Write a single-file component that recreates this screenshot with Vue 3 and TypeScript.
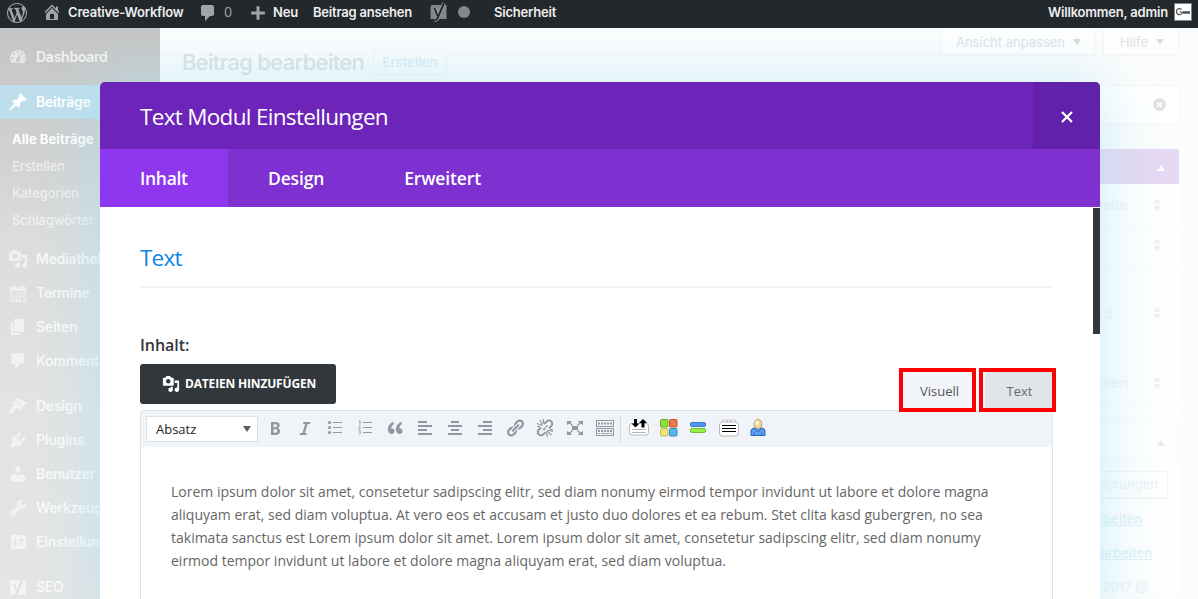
<script setup lang="ts">
interface MenuItem {
  label: string
  icon: string
  gap?: boolean
  active?: boolean
  sub?: string[]
}

const icons: Record<string, string> = {
  wordpress:
    'M20 10c0-5.51-4.49-10-10-10C4.48 0 0 4.49 0 10c0 5.52 4.48 10 10 10 5.51 0 10-4.48 10-10zM7.78 15.37L4.37 6.22c.55-.02 1.17-.08 1.17-.08.5-.06.44-1.13-.06-1.11 0 0-1.45.11-2.37.11-.18 0-.37 0-.58-.01C4.12 2.69 6.87 1.11 10 1.11c2.33 0 4.45.87 6.05 2.34-.68-.11-1.65.39-1.65 1.58 0 .74.45 1.36.9 2.1.35.61.55 1.36.55 2.46 0 1.49-1.4 5-1.4 5l-3.03-8.37c.54-.02.82-.17.82-.17.5-.05.44-1.25-.06-1.22 0 0-1.44.12-2.38.12-.87 0-2.33-.12-2.33-.12-.5-.03-.56 1.2-.06 1.22l.92.08 1.26 3.41zM17.41 10c.24-.64.74-1.87.43-4.25.7 1.29 1.05 2.71 1.05 4.25 0 3.29-1.73 6.24-4.4 7.78.97-2.59 1.94-5.2 2.92-7.78zM6.1 18.09C3.12 16.65 1.11 13.53 1.11 10c0-1.3.23-2.48.72-3.59C3.25 10.3 4.67 14.2 6.1 18.09zm4.03-6.63l2.58 6.98c-.86.29-1.76.45-2.71.45-.79 0-1.57-.11-2.29-.33.81-2.38 1.62-4.74 2.42-7.1z',
  home: 'M16 8.5l1.53 1.53-1.06 1.06L10 4.6l-6.47 6.49-1.06-1.06L10 2.5l4 4v-2h2v4zm-6-2.46l6 5.99V18H4v-5.97zM12 17v-5H8v5h4z',
  comment: 'M5 2h9c1.1 0 2 .9 2 2v7c0 1.1-.9 2-2 2h-2l-5 5v-5H5c-1.1 0-2-.9-2-2V4c0-1.1.9-2 2-2z',
  dashboard:
    'M3.76 16h12.48c1.1-1.37 1.76-3.11 1.76-5 0-4.42-3.58-8-8-8s-8 3.58-8 8c0 1.89.66 3.63 1.76 5zM10 4c.55 0 1 .45 1 1s-.45 1-1 1-1-.45-1-1 .45-1 1-1zM6 6c.55 0 1 .45 1 1s-.45 1-1 1-1-.45-1-1 .45-1 1-1zm8 0c.55 0 1 .45 1 1s-.45 1-1 1-1-.45-1-1 .45-1 1-1zm-5.37 5.55L12 7v6c0 1.1-.9 2-2 2s-2-.9-2-2c0-.57.24-1.08.63-1.45zM4 10c.55 0 1 .45 1 1s-.45 1-1 1-1-.45-1-1 .45-1 1-1zm12 0c.55 0 1 .45 1 1s-.45 1-1 1-1-.45-1-1 .45-1 1-1z',
  post: 'M10.44 3.02l1.82-1.82 6.36 6.35-1.83 1.82c-1.05-.68-2.48-.57-3.41.36l-.75.75c-.92.93-1.04 2.35-.35 3.41l-1.83 1.82-2.41-2.41-2.8 2.79c-.42.42-3.38 2.71-3.8 2.29s1.86-3.39 2.28-3.81l2.79-2.79L4.1 9.36l1.83-1.82c1.05.69 2.48.57 3.4-.36l.75-.75c.93-.92 1.05-2.35.36-3.41z',
  media:
    'M13 11V4c0-.55-.45-1-1-1h-1.67L9 1H5L3.67 3H2c-.55 0-1 .45-1 1v7c0 .55.45 1 1 1h10c.55 0 1-.45 1-1zM7 4.5c1.38 0 2.5 1.12 2.5 2.5S8.38 9.5 7 9.5 4.5 8.38 4.5 7 5.62 4.5 7 4.5zM14 6h5v10.5c0 1.38-1.12 2.5-2.5 2.5S14 17.88 14 16.5s1.12-2.5 2.5-2.5c.17 0 .34.02.5.05V9h-3V6zm-4 8.05V13h2v3.5c0 1.38-1.12 2.5-2.5 2.5S7 17.88 7 16.5 8.12 14 9.5 14c.17 0 .34.02.5.05z',
  calendar:
    'M2 4h3V2h2v2h6V2h2v2h3v15H2V4zM3.2 8v9.8h13.6V8H3.2zM7.6 9.2h2v2h-2zM11 9.2h2v2h-2zM14 9.2h2v2h-2zM4.4 12.2h2v2h-2zM7.6 12.2h2v2h-2zM11 12.2h2v2h-2zM14 12.2h2v2h-2zM4.4 15.2h2v2h-2zM7.6 15.2h2v2h-2zM11 15.2h2v2h-2z',
  page: 'M6 15V2h10v13H6zm-1 1h8v2H3V5h2v11z',
  appearance:
    'M14.48 11.06L7.41 3.99l1.5-1.5c.5-.56 2.3-.47 3.51.32 1.21.8 1.43 1.28 2.91 2.1 1.18.64 2.45 1.26 4.45.85zm-.71.71L6.7 4.7 4.93 6.47c-.39.39-.39 1.02 0 1.41l1.06 1.06c.39.39.39 1.03 0 1.42-.6.6-1.43 1.11-2.21 1.69-.35.26-.7.53-1.01.84C1.43 14.23.4 16.08 1.4 17.07c.99 1 2.84-.03 4.18-1.36.31-.31.58-.66.85-1.02.57-.78 1.08-1.61 1.69-2.21.39-.39 1.02-.39 1.41 0l1.06 1.06c.39.39 1.02.39 1.41 0z',
  plugins:
    'M13.11 4.36L9.87 7.6 8 5.73l3.24-3.24c.35-.34 1.05-.2 1.56.32.52.51.66 1.21.31 1.55zm-8 1.77l.91-1.12 9.01 9.01-1.19.84c-.71.71-2.63 1.16-3.82 1.16H6.14L4.9 17.26c-.59.59-1.54.59-2.12 0-.59-.58-.59-1.53 0-2.12l1.24-1.24v-3.88c0-1.13.4-3.19 1.09-3.89zm7.26 3.97l3.24-3.24c.34-.35 1.04-.21 1.55.31.52.51.66 1.21.31 1.55l-3.24 3.25z',
  users:
    'M10 9.25c-2.27 0-2.73-3.44-2.73-3.44C7 4.02 7.82 2 9.97 2c2.16 0 2.98 2.02 2.71 3.81 0 0-.41 3.44-2.68 3.44zm0 2.57L12.72 10c2.39 0 4.52 2.33 4.52 4.53v2.49s-3.65 1.13-7.24 1.13c-3.65 0-7.24-1.13-7.24-1.13v-2.49c0-2.25 1.94-4.48 4.47-4.48z',
  tools:
    'M16.68 9.77c-1.34 1.34-3.3 1.67-4.95.99l-5.41 6.52c-.99.99-2.59.99-3.58 0s-.99-2.59 0-3.57l6.52-5.42c-.68-1.65-.35-3.61.99-4.95 1.28-1.28 3.12-1.62 4.72-1.06l-2.89 2.89 2.82 2.82 2.86-2.87c.53 1.58.18 3.39-1.08 4.65zM3.81 16.21c.4.39 1.04.39 1.43 0 .4-.4.4-1.04 0-1.43-.39-.4-1.03-.4-1.43 0-.39.39-.39 1.03 0 1.43z',
  settings:
    'M18 16V4c0-.55-.45-1-1-1H4c-.55 0-1 .45-1 1v12c0 .55.45 1 1 1h13c.55 0 1-.45 1-1zM8 11h1c.55 0 1 .45 1 1s-.45 1-1 1H8v1.5c0 .28-.22.5-.5.5s-.5-.22-.5-.5V13H6c-.55 0-1-.45-1-1s.45-1 1-1h1V5.5c0-.28.22-.5.5-.5s.5.22.5.5V11zm5-2h-1c-.55 0-1-.45-1-1s.45-1 1-1h1V5.5c0-.28.22-.5.5-.5s.5.22.5.5V7h1c.55 0 1 .45 1 1s-.45 1-1 1h-1v5.5c0 .28-.22.5-.5.5s-.5-.22-.5-.5V9z',
  bold: 'M6 4v13h4.54c1.37 0 2.46-.33 3.26-1 .8-.66 1.2-1.58 1.2-2.77 0-.84-.17-1.51-.51-2.01s-.9-.85-1.67-1.03v-.09c.57-.1 1.02-.4 1.36-.9s.51-1.13.51-1.91c0-1.14-.39-1.98-1.17-2.5C12.75 4.26 11.5 4 9.78 4H6zm2.57 5.15V6.26h1.36c.73 0 1.27.11 1.61.32.34.22.51.58.51 1.07 0 .54-.16.92-.47 1.15s-.82.35-1.51.35h-1.5zm0 2.19h1.6c1.44 0 2.16.53 2.16 1.61 0 .6-.17 1.05-.51 1.34s-.86.43-1.57.43H8.57v-3.38z',
  italic: 'M14.78 6h-2.13l-2.8 9h2.12l-.62 2H4.6l.62-2h2.14l2.8-9H8.03l.62-2h6.75z',
  quote:
    'M9.49 13.22c0-.74-.2-1.38-.61-1.9-.62-.78-1.83-.88-2.53-.72-.29-1.65 1.11-3.75 2.92-4.65L7.88 4c-2.73 1.3-5.42 4.28-4.96 8.05C3.21 14.43 4.59 16 6.54 16c.85 0 1.56-.25 2.12-.75s.83-1.18.83-2.03zm8.05 0c0-.74-.2-1.38-.61-1.9-.63-.78-1.83-.88-2.53-.72-.29-1.65 1.11-3.75 2.92-4.65L15.93 4c-2.73 1.3-5.41 4.28-4.95 8.05.29 2.38 1.66 3.95 3.61 3.95.85 0 1.56-.25 2.12-.75s.83-1.18.83-2.03z',
  left: 'M12 5V3H3v2h9zm5 4V7H3v2h14zm-5 4v-2H3v2h9zm5 4v-2H3v2h14z',
  center: 'M14 5V3H6v2h8zm3 4V7H3v2h14zm-3 4v-2H6v2h8zm3 4v-2H3v2h14z',
  right: 'M17 5V3H8v2h9zm0 4V7H3v2h14zm0 4v-2H8v2h9zm0 4v-2H3v2h14z',
  link: 'M17.74 2.76c1.68 1.69 1.68 4.41 0 6.1l-1.53 1.52c-1.12 1.12-2.7 1.47-4.14 1.09l2.62-2.61.76-.77.76-.76c.84-.84.84-2.2 0-3.04-.84-.85-2.2-.85-3.04 0l-.77.76-3.38 3.38c-.37-1.44-.02-3.02 1.1-4.14l1.52-1.53c1.69-1.68 4.42-1.68 6.1 0zM8.59 13.43l5.34-5.34c.42-.42.42-1.1 0-1.52-.44-.43-1.13-.39-1.53 0l-5.33 5.34c-.42.42-.42 1.1 0 1.52.44.43 1.13.39 1.52 0zm-.76 2.29l4.14-4.15c.38 1.44.03 3.02-1.09 4.14l-1.52 1.53c-1.69 1.68-4.41 1.68-6.1 0-1.68-1.68-1.68-4.42 0-6.1l1.53-1.52c1.12-1.12 2.7-1.47 4.14-1.1l-4.14 4.15c-.85.84-.85 2.2 0 3.05.84.84 2.2.84 3.04 0z',
}

const menu: MenuItem[] = [
  { label: 'Dashboard', icon: 'dashboard' },
  { label: 'Beiträge', icon: 'post', gap: true, active: true, sub: ['Alle Beiträge', 'Erstellen', 'Kategorien', 'Schlagwörter'] },
  { label: 'Mediathek', icon: 'media' },
  { label: 'Termine', icon: 'calendar' },
  { label: 'Seiten', icon: 'page' },
  { label: 'Kommentare', icon: 'comment' },
  { label: 'Design', icon: 'appearance', gap: true },
  { label: 'Plugins', icon: 'plugins' },
  { label: 'Benutzer', icon: 'users' },
  { label: 'Werkzeuge', icon: 'tools' },
  { label: 'Einstellungen', icon: 'settings' },
  { label: 'SEO', icon: 'yoast', gap: true },
]

const tabs = ['Inhalt', 'Design', 'Erweitert']
const formatTools = ['bold', 'italic', 'ul', 'ol', 'quote', 'left', 'center', 'right', 'link', 'unlink', 'fullscreen', 'keyboard']
const paragraph = [
  'Lorem ipsum dolor sit amet, consetetur sadipscing elitr, sed diam nonumy eirmod tempor invidunt ut labore et dolore magna',
  'aliquyam erat, sed diam voluptua. At vero eos et accusam et justo duo dolores et ea rebum. Stet clita kasd gubergren, no sea',
  'takimata sanctus est Lorem ipsum dolor sit amet. Lorem ipsum dolor sit amet, consetetur sadipscing elitr, sed diam nonumy',
  'eirmod tempor invidunt ut labore et dolore magna aliquyam erat, sed diam voluptua.',
]
</script>

<template>
  <div class="page">
    <header class="adminbar">
      <svg class="ico wp" viewBox="0 0 20 20"><path :d="icons.wordpress" /></svg>
      <svg class="ico home" viewBox="0 0 20 20"><path :d="icons.home" fill-rule="evenodd" /></svg>
      <span class="bar-text site">Creative-Workflow</span>
      <svg class="ico comments" viewBox="0 0 20 20"><path :d="icons.comment" /></svg>
      <span class="bar-text count">0</span>
      <svg class="ico plus" viewBox="0 0 14 14"><path d="M5.7 1h2.600v4.700H13v2.600H8.300V13H5.700V8.300H1V5.700h4.700z" /></svg>
      <span class="bar-text new">Neu</span>
      <span class="bar-text view">Beitrag ansehen</span>
      <svg class="yoast" viewBox="0 0 18 20">
        <path d="M3 3h14v14H1V5q0-2 2-2z" fill="#82878c" />
        <path d="M5 6l3 8M14.500 1L9 14q-1 4-4 4" stroke="#a4a8ac" stroke-width="3.400" fill="none" />
        <path d="M5 6l3 8M14.500 1L9 14q-1 4-4 4" stroke="#23282d" stroke-width="2" fill="none" />
      </svg>
      <span class="dot"></span>
      <span class="bar-text security">Sicherheit</span>
      <span class="bar-text welcome">Willkommen, admin</span>
      <svg class="avatar" viewBox="0 0 18 18">
        <path d="M.5.5h17v17H.5z" fill="#fff" stroke="#82878c" />
        <path d="M7.500 6.500a3 3 0 1 0 .3 4V9H5.500" fill="none" stroke="#555" stroke-width="1.200" />
        <path d="M8.500 8h7.500v3H8.500z" fill="#777" />
        <path d="M9 9.500h7" stroke="#444" stroke-dasharray="1.500 .7" />
      </svg>
    </header>

    <div class="body">
      <nav class="sidebar">
        <template v-for="item in menu" :key="item.label">
          <div class="menu-row" :class="{ gap: item.gap, active: item.active }">
            <svg class="menu-ico" viewBox="0 0 20 20">
              <g v-if="item.icon === 'yoast'">
                <path d="M4 3h14v15H4q-2 0-2-2V5q0-2 2-2z" />
                <path d="M6 7l3 7M15 1l-5 13q-1 4-4 4" class="yoast-cut" />
              </g>
              <path v-else :d="icons[item.icon]" fill-rule="evenodd" />
            </svg>
            <span>{{ item.label }}</span>
          </div>
          <div v-if="item.sub" class="submenu">
            <span v-for="(s, i) in item.sub" :key="s" :class="{ current: i === 0 }">{{ s }}</span>
          </div>
        </template>
      </nav>

      <main class="content">
        <div class="top-row">
          <div class="heading">
            <h1>Beitrag bearbeiten</h1>
            <span class="create">Erstellen</span>
          </div>
          <div class="screen-tabs">
            <span class="screen-tab wide">Ansicht anpassen<i class="down"></i></span>
            <span class="screen-tab">Hilfe<i class="down"></i></span>
          </div>
        </div>
        <div class="notice">
          <svg viewBox="0 0 14 14"><circle cx="7" cy="7" r="6.800" /><path d="M4.300 4.300l5.400 5.400M9.700 4.300L4.300 9.700" /></svg>
        </div>
        <aside class="meta">
          <div class="meta-head"><i class="up"></i></div>
          <div class="option first"><span>Breite</span><svg viewBox="0 0 8 14"><path d="M4 0l3.500 5.500h-7zM4 13.500L.5 8h7z" /></svg></div>
          <div class="option second"><svg viewBox="0 0 8 14"><path d="M4 0l3.500 5.500h-7zM4 13.500L.5 8h7z" /></svg></div>
          <div class="option third"><span class="std">Standard</span><svg viewBox="0 0 8 14"><path d="M4 0l3.500 5.500h-7zM4 13.500L.5 8h7z" /></svg></div>
          <div class="option fourth"><span>Verstecken</span><svg viewBox="0 0 8 14"><path d="M4 0l3.500 5.500h-7zM4 13.500L.5 8h7z" /></svg></div>
          <div class="publish-head"><i class="up grey"></i></div>
          <div class="publish">
            <span class="preview">Änderungen</span>
            <span class="edit status">Bearbeiten</span>
            <span class="edit visibility">Bearbeiten</span>
            <b class="date">2017 @</b>
          </div>
        </aside>
      </main>
    </div>

    <section class="modal">
      <div class="modal-head">
        <h2>Text Modul Einstellungen</h2>
        <button class="close"><svg viewBox="0 0 12 12"><path d="M1 1l10 10M11 1L1 11" /></svg></button>
      </div>
      <div class="modal-tabs">
        <span v-for="(t, i) in tabs" :key="t" :class="{ on: i === 0 }">{{ t }}</span>
      </div>
      <div class="modal-body">
        <h3>Text</h3>
        <label>Inhalt:</label>
        <div class="editor-top">
          <button class="add-media">
            <svg viewBox="0 0 20 20"><path :d="icons.media" fill-rule="evenodd" /></svg>
            <span>DATEIEN HINZUFÜGEN</span>
          </button>
          <div class="modes">
            <span class="mode">Visuell</span>
            <span class="mode off">Text</span>
          </div>
        </div>
        <div class="editor">
          <div class="toolbar">
            <div class="format"><span>Absatz</span><i></i></div>
            <span v-for="t in formatTools" :key="t" class="tool">
              <svg v-if="t === 'ul'" viewBox="0 0 20 20">
                <g><circle cx="4.500" cy="4.500" r="1.600" /><circle cx="4.500" cy="9.500" r="1.600" /><circle cx="4.500" cy="14.500" r="1.600" /></g>
                <path d="M8 4h9v1H8zM8 9h9v1H8zM8 14h9v1H8z" />
              </svg>
              <svg v-else-if="t === 'ol'" viewBox="0 0 20 20">
                <path d="M8 4h9v1H8zM8 9h9v1H8zM8 14h9v1H8z" />
                <path class="line thin" d="M4 3.200l1-.7v4M3.700 8q1.600-1 1.800.2 0 .8-1.800 2.300h2M3.700 12.700h1.800l-1 1.500q1.400 0 1.100 1.200-.3.800-1.900.6" />
              </svg>
              <svg v-else-if="t === 'unlink'" viewBox="0 0 20 20">
                <path class="line" d="M9 6l2.600-2.500a3.200 3.200 0 0 1 4.700 4.600l-2.200 2.200M6 9.500l-2.300 2.300a3.200 3.200 0 0 0 4.600 4.600l2-2M8.500 11.800l1.500-1.500" />
                <path class="line ray" d="M7.500 7.500L2 5.500M7.500 6.500L5 2M8.500 5.500V1M12.500 12l5.500 1.500M12 13l4.500 4M11 13.500l1.500 5M12.500 7.500l-2 2M2 8.500h3M15 11.500h3" />
              </svg>
              <svg v-else-if="t === 'fullscreen'" viewBox="0 0 20 20">
                <path d="M7 8h6v4H7zM2 3h5L5.500 4.500 8 7 7 8 4.500 5.500 2 7zM18 3h-5l1.500 1.500L12 7l1 1 2.500-2.500L18 7zM2 17h5l-1.500-1.500L8 13l-1-1-2.500 2.500L2 13zM18 17h-5l1.500-1.500L12 13l1-1 2.500 2.500L18 13z" />
              </svg>
              <svg v-else-if="t === 'keyboard'" viewBox="0 0 20 20">
                <path fill-rule="evenodd" d="M1 2h18v7H1zM2 3v5h16V3zM1 10h18v8H1zM2 11v6h16v-6z" />
                <path class="line" stroke-dasharray="2 1" d="M3 5.500h14M3 12.900h14" />
                <path class="line thin" d="M3 15.500h2M6 15.500h8M15 15.500h2" />
              </svg>
              <svg v-else viewBox="0 0 20 20"><path :d="icons[t]" /></svg>
            </span>
            <i class="divider"></i>
            <span class="tool color">
              <svg viewBox="0 0 20 20">
                <rect x=".5" y="5.500" width="19" height="11.500" rx="2.500" fill="#fff" stroke="#bbb" />
                <path d="M3 11.500h14M3 14.500h14" stroke="#b5b5b5" />
                <path d="M5 1h3v4.500h2.500L6.500 9.500l-4-4H5z" fill="#000" />
                <path d="M12.500 9.500V5H10l4-4 4 4h-2.500v4.500z" fill="#000" />
              </svg>
            </span>
            <span class="tool color">
              <svg viewBox="0 0 20 20">
                <rect x="1.500" y="1.500" width="7.500" height="7.500" rx="1" fill="#8be23c" stroke="#62ad29" />
                <rect x="10.500" y="1.500" width="7.500" height="7.500" rx="1" fill="#f07850" stroke="#c8532f" />
                <rect x="1.500" y="10.500" width="7.500" height="7.500" rx="1" fill="#ebe37c" stroke="#c9bd55" />
                <rect x="10.500" y="10.500" width="7.500" height="7.500" rx="1" fill="#58b6ef" stroke="#318bc5" />
              </svg>
            </span>
            <span class="tool color bars">
              <svg viewBox="0 0 20 20">
                <rect x="2.500" y="4.500" width="15" height="4" rx="1.500" fill="#5196f5" stroke="#3f78cf" />
                <rect x="2.500" y="10.500" width="15" height="4" rx="1.500" fill="#9bee47" stroke="#6cc02f" />
              </svg>
            </span>
            <span class="tool color">
              <svg viewBox="0 0 20 20">
                <path d="M3.500 4.500V2h4v2.500M8.500 4.500V2h3v2.500M12.500 4.500V2h4v2.500" fill="#fff" stroke="#ccc" />
                <rect x=".5" y="4" width="19" height="14" rx="3" fill="#fff" stroke="#b8b8b8" />
                <path d="M3 7.500h14M3 10.500h14M3 13.500h14" stroke="#000" />
              </svg>
            </span>
            <span class="tool color person">
              <svg viewBox="0 0 20 20">
                <path d="M3 17.500V13q0-2.500 3-3h8q3 .5 3 3v4.500z" fill="#5a9df2" stroke="#2868c5" />
                <path d="M6 14.500v3M14 14.500v3M7 11l3 2.500 3-2.500" fill="none" stroke="#2a65bd" />
                <ellipse cx="10" cy="6" rx="3.700" ry="4.500" fill="#f2d9a0" stroke="#c4a666" />
                <ellipse cx="9" cy="5" rx="1.700" ry="2" fill="#fff5d8" />
              </svg>
            </span>
          </div>
          <div class="document">
            <p><span v-for="line in paragraph" :key="line">{{ line }}</span></p>
          </div>
        </div>
      </div>
      <i class="scroll"></i>
    </section>
  </div>
</template>

<style>
body { margin: 0; overflow: hidden; }
</style>

<style scoped>
.page { position: relative; width: 1198px; height: 599px; overflow: hidden; background: #fcfcfc; font-family: Inter, "Liberation Sans", sans-serif; font-size: 13px; }
.page * { box-sizing: border-box; }
h1, h2, h3, p { margin: 0; font-weight: 400; }
button { border: 0; padding: 0; font-family: inherit; }
svg { display: block; flex: none; }

.adminbar { position: relative; z-index: 3; height: 28px; padding-left: 7px; background: #23282d; display: flex; align-items: center; }
.adminbar .ico { fill: #a0a5aa; }
.bar-text { color: #eee; font-weight: 600; line-height: 25px; height: 28px; white-space: nowrap; letter-spacing: -.2px; flex: none; }
.wp { width: 20px; height: 20px; margin-top: -3px; }
.home { width: 20px; height: 20px; margin: -4px 0 0 15px; }
.site { margin-left: 6px; width: 115px; }
.comments { width: 20px; height: 20px; margin: -2px 0 0 15px; }
.count { margin-left: 6px; width: 12px; color: #9ca1a6; font-weight: 400; }
.plus { width: 16px; height: 16px; margin: -3px 0 0 14px; }
.new { margin-left: 7px; width: 25px; }
.view { margin-left: 15px; width: 100px; }
.yoast { width: 19px; height: 20px; margin: -4px 0 0 16px; }
.dot { width: 12px; height: 12px; margin: -4px 0 0 10px; border-radius: 50%; background: #888; }
.security { margin-left: 24px; }
.welcome { margin-left: auto; width: 119px; }
.avatar { width: 18px; height: 18px; margin: -4px 6px 0 7px; }

.body { display: flex; height: 571px; }
.sidebar { width: 160px; flex: none; padding-top: 12px; background: linear-gradient(#c5c5c5, #cdcdcd 90px, #dcdcdc 210px, #e3e3e3 380px, #e5e5e5); }
.menu-row { height: 34px; display: flex; align-items: center; padding-left: 8px; color: rgba(255, 255, 255, .8); font-weight: 600; font-size: 14px; letter-spacing: -.25px; }
.menu-row span { margin-top: -2px; }
.menu-row.gap { margin-top: 11px; }
.menu-row.active { background: #bfdeec; color: #fff; }
.menu-ico { width: 20px; height: 20px; margin: -1px 8px 0 0; fill: rgba(255, 255, 255, .55); }
.active .menu-ico { fill: #fff; }
.yoast-cut { fill: none; stroke: #dedede; stroke-width: 1.8px; }
.submenu { padding: 7px 0 8px 12px; display: flex; flex-direction: column; }
.submenu span { height: 27px; line-height: 27px; color: rgba(255, 255, 255, .62); font-size: 13px; font-weight: 500; letter-spacing: -.1px; }
.submenu .current { color: #fff; font-weight: 700; letter-spacing: .06px; }

.content { flex: 1; min-width: 0; padding-right: 19px; }
.top-row { display: flex; justify-content: space-between; height: 57px; padding-left: 22px; }
.heading { display: flex; align-items: center; padding-top: 10px; }
h1 { font-size: 22px; font-weight: 500; letter-spacing: -.68px; color: #dae1e3; width: 191px; white-space: nowrap; }
.create { width: 74px; height: 26px; line-height: 24px; text-align: center; border: 1px solid #eef5f8; border-radius: 3px; color: #dcedf5; font-weight: 600; letter-spacing: .1px; }
.screen-tabs { display: flex; gap: 8px; height: 28px; }
.screen-tab { width: 76px; display: flex; align-items: center; justify-content: center; gap: 8px; padding: 2px 0 0 2px; background: rgba(255, 255, 255, .6); border: 1px solid #f6f6f6; border-top: 0; border-bottom-width: 2px; color: #dfe3e4; white-space: nowrap; }
.screen-tab.wide { width: 155px; }
.down { border: 4px solid transparent; border-top: 6px solid #d9dbdc; border-bottom: 0; }
.notice { height: 39px; background: #fff; border: 1px solid #f7f7f7; margin-left: 22px; margin-right: -1px; display: flex; align-items: center; justify-content: flex-end; padding: 0 13px 1px 0; }
.notice svg { width: 13px; height: 13px; }
.notice circle { fill: #dedfe0; }
.notice path { stroke: #fff; stroke-width: 2; }

.meta { width: 280px; margin: 25px 0 0 auto; background: #fefefe; color: #f0f3f4; font-size: 14px; font-weight: 500; }
.meta-head { height: 35px; background: #e5d8f2; display: flex; align-items: center; justify-content: flex-end; padding: 3px 14px 0 0; }
.up { border: 4px solid transparent; border-top: 0; border-bottom: 6px solid #fff; }
.up.grey { border-bottom-color: #ebebeb; }
.option { display: flex; align-items: center; justify-content: flex-end; padding-right: 18px; border-bottom: 1px solid #fafafa; }
.option svg { width: 8px; height: 14px; fill: #efefef; margin-left: 25px; }
.option .std { margin-right: 16px; }
.option.first { height: 41px; padding-top: 1px; }
.option.second { height: 40px; }
.option.third { height: 96px; border: 0; }
.option.fourth { height: 44px; }
.publish-head { margin-top: 18px; height: 37px; border: 1px solid #f9f9f9; display: flex; align-items: center; justify-content: flex-end; padding: 3px 13px 0 0; }
.publish { display: flex; flex-direction: column; align-items: flex-end; padding-top: 11px; font-size: 13px; }
.preview { height: 28px; line-height: 25px; padding: 0 9px; margin-right: 11px; border: 1px solid #f4f4f4; border-bottom-width: 2px; border-radius: 3px; }
.edit { color: #e1f1f7; text-decoration: underline; }
.status { margin: 12px 37px 0 0; }
.visibility { margin: 18px 27px 0 0; }
.date { margin: 18px 31px 0 0; font-weight: 600; }

.modal { position: absolute; z-index: 2; left: 100px; top: 82px; width: 1000px; height: 540px; border-radius: 5px 5px 0 0; background: #fff; box-shadow: 0 0 60px rgba(165, 226, 246, .62); font-family: "Open Sans", sans-serif; }
.modal-head { height: 67px; background: #6c24b9; border-radius: 5px 5px 0 0; overflow: hidden; display: flex; justify-content: space-between; padding-left: 40px; }
h2 { font-size: 22.500px; line-height: 69px; color: #fff; letter-spacing: -.69px; }
.close { width: 67px; background: #6221aa; display: flex; align-items: center; justify-content: center; padding-top: 2px; }
.close svg { width: 12px; height: 12px; fill: none; stroke: #fff; stroke-width: 2.2; }
.modal-tabs { height: 58px; display: flex; background: #7e30d1; color: #fff; }
.modal-tabs span { padding: 0 40px; font-size: 17.500px; font-weight: 600; line-height: 58px; letter-spacing: -.15px; }
.modal-tabs .on { background: #8f37ef; width: 128px; letter-spacing: -.3px; }
.modal-body { padding: 0 47px 0 40px; display: flex; flex-direction: column; }
h3 { height: 81px; line-height: 101px; border-bottom: 2px solid #eff3f7; font-size: 22.500px; letter-spacing: -.8px; color: #0a86e3; }
label { height: 76px; padding-top: 46px; line-height: 22px; font-size: 16px; letter-spacing: -.05px; font-weight: 600; color: #32373c; }
.editor-top { display: flex; justify-content: space-between; height: 46px; }
.add-media { width: 196px; height: 40px; border-radius: 3px; background: #32373c; color: #fff; display: flex; align-items: center; padding: 0 0 1px 22px; font-size: 12px; font-weight: 700; letter-spacing: -.17px; white-space: nowrap; }
.add-media svg { width: 18px; height: 18px; fill: #fff; margin-right: 5px; }
.modes { display: flex; gap: 3px; margin: 4px -3px 0 0; height: 44px; position: relative; z-index: 1; }
.mode { width: 77px; height: 44px; border: 4px solid #f00; background: #f1f4f8; font-size: 13px; color: #555; text-align: center; line-height: 39px; padding-left: 4px; }
.mode.off { background: #e0e5e9; color: #6c6c6c; box-shadow: inset 2px 0 #f1f4f8; }
.editor { height: 240px; border: 1px solid #e0e4ea; border-radius: 3px 3px 0 0; }
.toolbar { height: 36px; background: #f0f4f8; display: flex; align-items: center; padding-left: 5px; }
.format { width: 112px; height: 26px; border: 1px solid #dcdfe3; background: #fff; display: flex; align-items: center; justify-content: space-between; padding: 0 6px 0 9px; font-size: 13px; color: #222; margin-right: 2px; }
.format i { border: 4px solid transparent; border-top: 6px solid #555d66; border-bottom: 0; }
.tool { width: 30px; height: 30px; display: flex; align-items: center; justify-content: center; }
.tool svg { width: 20px; height: 20px; fill: #8f98a1; margin-top: -2px; }
.bars svg, .person svg { margin-left: -2px; }
.line { fill: none; stroke: #8f98a1; stroke-width: 2; }
.thin { stroke-width: .9; }
.ray { stroke-width: 1.2; }
.divider { width: 1px; height: 28px; background: #d9dce0; }
.divider + .tool { margin-left: 3px; }
.document { padding: 33px 30px; }
.document p { display: flex; flex-direction: column; font-size: 14px; line-height: 23px; color: #666; white-space: nowrap; }
.scroll { position: absolute; right: 0; top: 126px; width: 7px; height: 126px; background: #32373c; }
</style>
